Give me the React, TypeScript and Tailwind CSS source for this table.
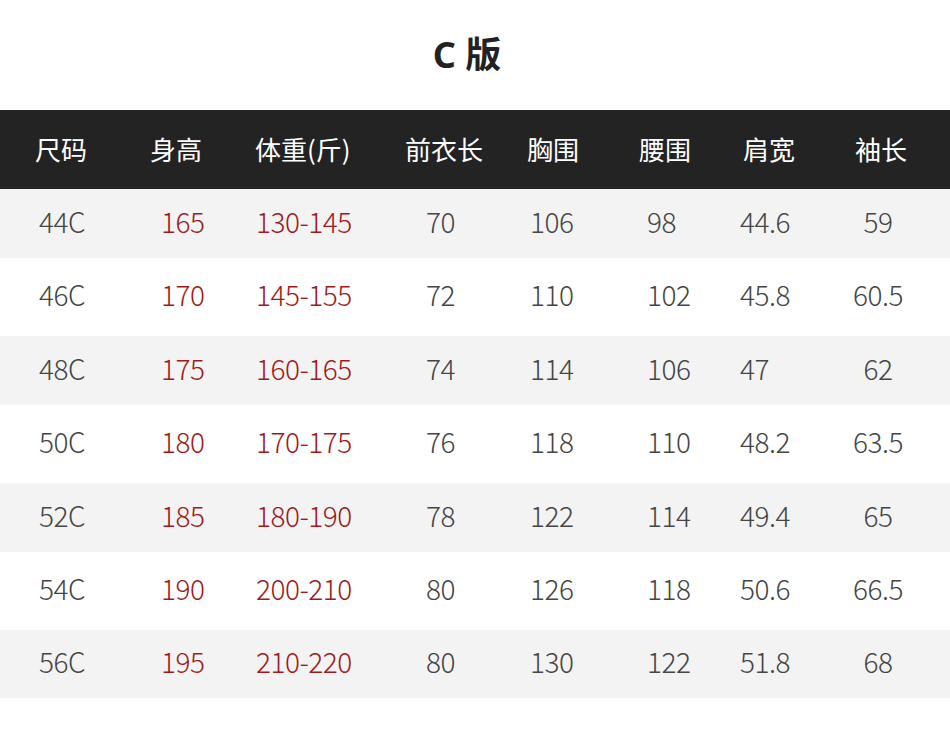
import React from "react";

const cols = [
  { w: "w-[120px]", h: "pl-[35px]", d: "pl-[39px]" },
  { w: "w-[120px]", h: "pl-[30px]", d: "pl-[41px]" },
  { w: "w-[140px]", h: "pl-[15px]", d: "pl-[16px]" },
  { w: "w-[130px]", h: "pl-[25px]", d: "pl-[46px]" },
  { w: "w-[110px]", h: "pl-[17px]", d: "pl-[20px]" },
  { w: "w-[105px]", h: "pl-[19px]", d: "pl-[27px]" },
  { w: "w-[105px]", h: "pl-[18px]", d: "pl-[15px]" },
  { w: "w-[120px]", h: "pl-[25px]", d: "text-center pr-[24px]" },
];

const headers = ["尺码", "身高", "体重(斤)", "前衣长", "胸围", "腰围", "肩宽", "袖长"];

const rows = [
  ["44C", "165", "130-145", "70", "106", "98", "44.6", "59"],
  ["46C", "170", "145-155", "72", "110", "102", "45.8", "60.5"],
  ["48C", "175", "160-165", "74", "114", "106", "47", "62"],
  ["50C", "180", "170-175", "76", "118", "110", "48.2", "63.5"],
  ["52C", "185", "180-190", "78", "122", "114", "49.4", "65"],
  ["54C", "190", "200-210", "80", "126", "118", "50.6", "66.5"],
  ["56C", "195", "210-220", "80", "130", "122", "51.8", "68"],
];

const rowStyles = [
  "h-[69px] bg-[#f3f3f3]",
  "h-[78px] bg-white",
  "h-[69px] bg-[#f3f3f3]",
  "h-[78px] bg-white",
  "h-[69px] bg-[#f3f3f3]",
  "h-[78px] bg-white",
  "h-[68px] bg-[#f3f3f3]",
];

export default function App() {
  return (
    <div className="w-[950px] h-[752px] bg-white font-['Noto_Sans_CJK_SC',sans-serif]">
      <div className="h-[110px] flex items-center justify-center pr-[16px]">
        <h1 className="text-[36px] font-bold text-[#222] leading-none font-['Noto_Sans','Noto_Sans_CJK_SC',sans-serif]">
          C 版
        </h1>
      </div>
      <div className="h-[79px] bg-[#232323] flex items-center">
        {headers.map((h, i) => (
          <div
            key={h}
            className={`${cols[i].w} ${cols[i].h} pb-[2px] text-[26px] text-white leading-none whitespace-nowrap`}
          >
            {h}
          </div>
        ))}
      </div>
      {rows.map((r, ri) => (
        <div key={r[0]} className={`${rowStyles[ri]} flex items-center`}>
          {r.map((v, ci) => (
            <div
              key={ci}
              className={`${cols[ci].w} ${cols[ci].d} pb-[6px] text-[28px] tracking-[-0.5px] leading-none font-light whitespace-nowrap ${
                ci === 1 || ci === 2 ? "text-[#9e1a20]" : "text-[#454545]"
              }`}
            >
              {v}
            </div>
          ))}
        </div>
      ))}
    </div>
  );
}
